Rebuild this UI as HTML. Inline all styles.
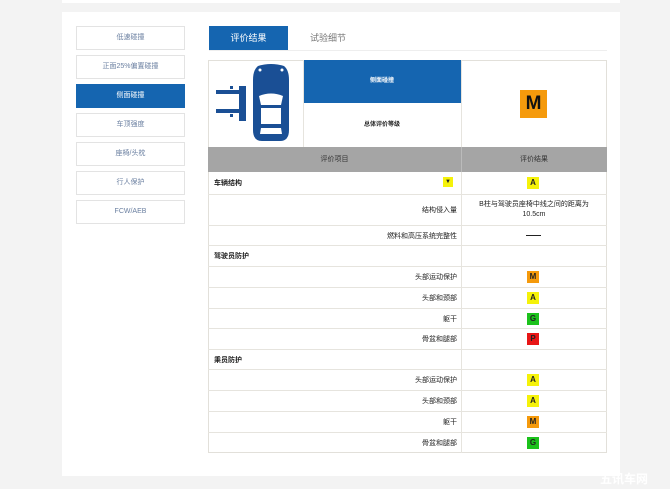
<!DOCTYPE html>
<html><head><meta charset="utf-8"><style>
*{margin:0;padding:0;box-sizing:border-box}
body{width:670px;height:489px;background:#f3f3f3;position:relative;overflow:hidden;font-family:"Liberation Sans","Noto Sans CJK SC",sans-serif;color:#222}
.a{position:absolute}
.panel{left:62px;top:12px;width:558px;height:464px;background:#fff}
.top{left:62px;top:0;width:558px;height:3px;background:#fff}
.btn{left:76px;width:109px;height:24px;border:1px solid #e3e3e3;background:#fff;font-size:7px;color:#6a7fa0;text-align:center;line-height:22px}
.btn.on{background:#1565b0;color:#fff;border-color:#1565b0}
.tab{left:209px;top:26px;width:79px;height:24px;background:#1565b0;color:#fff;font-size:9px;text-align:center;line-height:24px}
.tab2{left:310px;top:26px;font-size:9px;color:#777;line-height:24px}
.tline{left:209px;top:50px;width:398px;height:1px;background:#eee}
.tbl{left:208px;top:60px;width:399px;height:393px;border:1px solid #e2e0da}
.h{background:#1565b0;left:303px;top:60px;width:158px;height:43px;color:#fff;font-size:6px;font-weight:bold;text-align:center;line-height:43px}
.vl{width:1px;background:#e6e4de}
.gray{left:208px;top:147px;width:399px;height:25px;background:#a5a5a5;font-size:7px;color:#333}
.row{left:208px;width:399px;border-top:1px solid #e6e4de;font-size:7px}
.lab{position:absolute;right:150px;top:0;height:100%;display:flex;align-items:center}
.sec{position:absolute;left:6px;top:0;height:100%;display:flex;align-items:center;font-weight:bold}
.bd{position:absolute;left:319px;width:12px;height:12px;font-size:8px;font-weight:bold;text-align:center;line-height:12px}
.Y{background:#f5f20a}.O{background:#f59a0c}.G{background:#1cc21c}.R{background:#e81616}
</style></head><body>
<div class="a top"></div>
<div class="a panel"></div>
<div class="a btn" style="top:26px">低速碰撞</div>
<div class="a btn" style="top:55px">正面25%偏置碰撞</div>
<div class="a btn on" style="top:84px">侧面碰撞</div>
<div class="a btn" style="top:113px">车顶强度</div>
<div class="a btn" style="top:142px">座椅/头枕</div>
<div class="a btn" style="top:171px">行人保护</div>
<div class="a btn" style="top:200px">FCW/AEB</div>
<div class="a tab">评价结果</div>
<div class="a tab2">试验细节</div>
<div class="a tline"></div>
<div class="a tbl"></div>
<svg class="a" style="left:208px;top:60px" width="95" height="87" viewBox="208 60 95 87">
<g fill="#1a4f95">
<rect x="216" y="90" width="24" height="4"/><rect x="216" y="109" width="24" height="4"/>
<rect x="230" y="86" width="3" height="3"/><rect x="230" y="114" width="3" height="3"/>
<rect x="239" y="86" width="7" height="35"/>
<path d="M258 66 Q271 62 284 66 Q289 70 289 80 L289 130 Q289 141 280 141 L262 141 Q253 141 253 130 L253 80 Q253 70 258 66Z"/>
</g>
<g fill="#fff">
<path d="M259 96 Q271 91 283 96 L281 105 L261 105Z"/>
<rect x="261" y="108" width="20" height="16"/>
<path d="M261 128 L281 128 L282 134 L260 134Z"/>
<circle cx="260" cy="70" r="1.5"/><circle cx="282" cy="70" r="1.5"/>
</g>
</svg>
<div class="a h">侧面碰撞</div>
<div class="a" style="left:303px;top:103px;width:158px;height:44px;font-size:6px;font-weight:bold;text-align:center;line-height:44px">总体评价等级</div>
<div class="a vl" style="left:303px;top:60px;height:87px"></div>
<div class="a vl" style="left:461px;top:60px;height:393px"></div>
<div class="a O" style="left:520px;top:90px;width:27px;height:28px;font-size:19px;font-weight:bold;text-align:center;line-height:28px;color:#111">M</div>
<div class="a gray"><span class="a" style="left:0;width:253px;text-align:center;line-height:25px">评价项目</span><span class="a" style="left:253px;width:146px;text-align:center;line-height:25px">评价结果</span></div>
<div class="a vl" style="left:461px;top:147px;height:25px;background:#bbb"></div>

<div class="a row" style="top:172px;height:22px;border-top:none"><span class="sec">车辆结构</span><span class="a Y" style="left:235px;top:5px;width:10px;height:10px;font-size:6px;text-align:center;line-height:10px">▼</span><span class="bd Y" style="top:5px">A</span></div>
<div class="a row" style="top:194px;height:31px"><span class="lab">结构侵入量</span><span class="a" style="left:264px;width:124px;top:5px;text-align:center;line-height:10px;font-size:7px">B柱与驾驶员座椅中线之间的距离为10.5cm</span></div>
<div class="a row" style="top:225px;height:20px"><span class="lab">燃料和高压系统完整性</span><span class="a" style="left:318px;top:9px;width:15px;height:1px;background:#222"></span></div>
<div class="a row" style="top:245px;height:21px"><span class="sec">驾驶员防护</span></div>
<div class="a row" style="top:266px;height:21px"><span class="lab">头部运动保护</span><span class="bd O" style="top:4px">M</span></div>
<div class="a row" style="top:287px;height:21px"><span class="lab">头部和颈部</span><span class="bd Y" style="top:4px">A</span></div>
<div class="a row" style="top:308px;height:20px"><span class="lab">躯干</span><span class="bd G" style="top:4px">G</span></div>
<div class="a row" style="top:328px;height:21px"><span class="lab">骨盆和腿部</span><span class="bd R" style="top:4px">P</span></div>
<div class="a row" style="top:349px;height:20px"><span class="sec">乘员防护</span></div>
<div class="a row" style="top:369px;height:21px"><span class="lab">头部运动保护</span><span class="bd Y" style="top:4px">A</span></div>
<div class="a row" style="top:390px;height:21px"><span class="lab">头部和颈部</span><span class="bd Y" style="top:4px">A</span></div>
<div class="a row" style="top:411px;height:21px"><span class="lab">躯干</span><span class="bd O" style="top:4px">M</span></div>
<div class="a row" style="top:432px;height:21px"><span class="lab">骨盆和腿部</span><span class="bd G" style="top:4px">G</span></div>
<div class="a" style="left:600px;top:470px;font-size:12px;font-weight:bold;color:#fff">五讯车网</div>
</body></html>
